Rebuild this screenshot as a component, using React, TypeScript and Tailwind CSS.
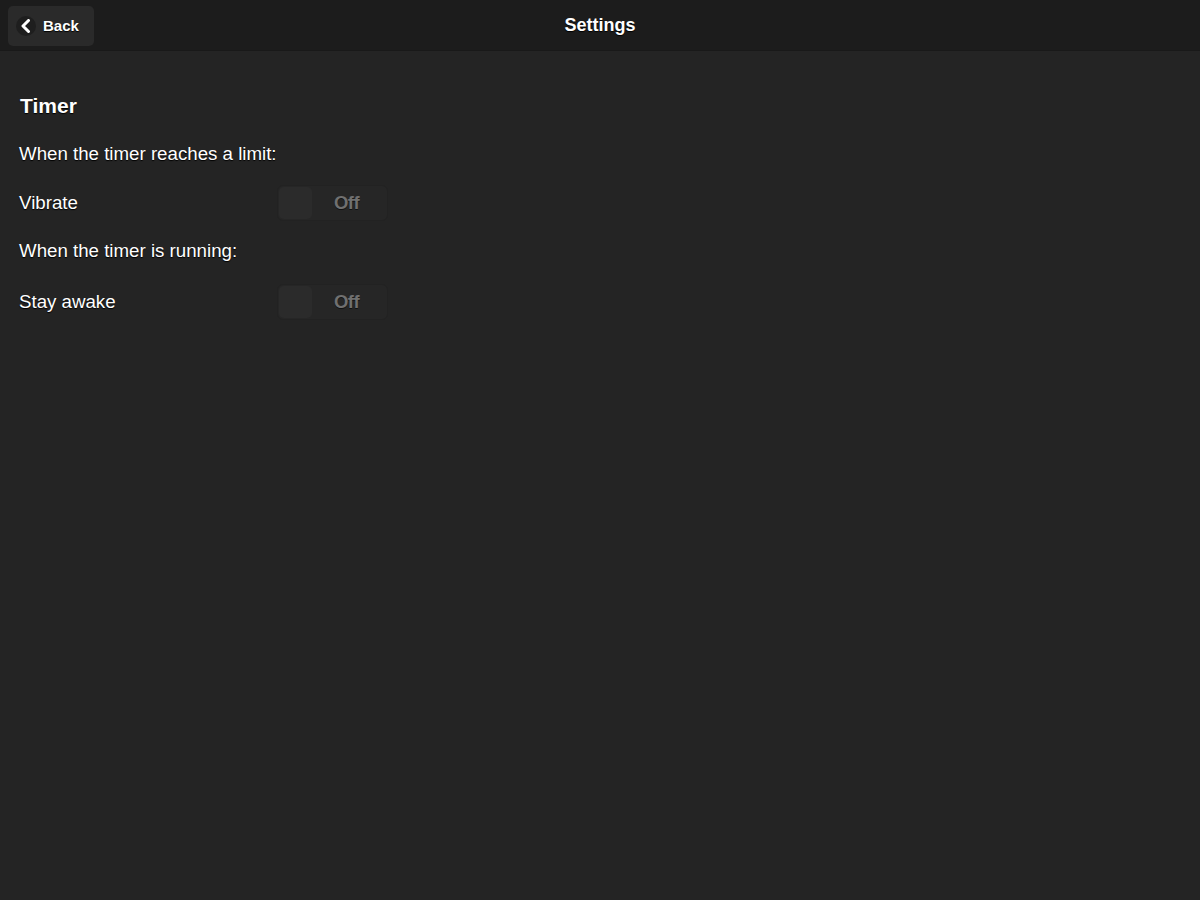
import React, { useState } from 'react';

function Toggle({ on, onChange }: { on: boolean; onChange: (v: boolean) => void }) {
  return (
    <button
      onClick={() => onChange(!on)}
      className="relative flex items-center h-[36px] w-[111px] rounded-[6px] bg-[#262626] border border-[#222222]"
    >
      <span className="ml-[1px] h-[32px] w-[33px] rounded-[5px] bg-[#2b2b2b]" />
      <span className="flex-1 pr-[6px] text-center text-[18.5px] font-bold tracking-[-0.5px] text-[#707070] [text-shadow:0_1px_0_#111]">
        {on ? 'On' : 'Off'}
      </span>
    </button>
  );
}

export default function App() {
  const [vibrate, setVibrate] = useState(false);
  const [awake, setAwake] = useState(false);

  return (
    <div className="min-h-[900px] w-full bg-[#242424] text-white font-['Liberation_Sans',Arial,sans-serif]">
      {/* Header */}
      <header className="relative h-[51px] bg-[#1c1c1c] border-b border-[#191919] flex items-center justify-center">
        <button className="absolute left-[8px] top-[6px] h-[40px] w-[86px] rounded-[5px] bg-[#2a2a2a] flex items-center pl-[8px] gap-[7px]">
          <span className="flex h-[20px] w-[20px] items-center justify-center rounded-full bg-[#1e1e1e]">
            <svg width="12" height="14" viewBox="0 0 12 14" fill="none">
              <path d="M8.5 1.5 L3 7 L8.5 12.5" stroke="white" strokeWidth="3" strokeLinecap="round" strokeLinejoin="round" />
            </svg>
          </span>
          <span className="text-[15px] font-bold [text-shadow:0_1px_1px_#000]">Back</span>
        </button>
        <h1 className="text-[18px] font-bold [text-shadow:0_1px_1px_#000]">Settings</h1>
      </header>

      {/* Content */}
      <main className="pl-[19px] pt-[40px] flex flex-col">
        <h2 className="h-[30px] flex items-center text-[21px] font-bold pl-[1px] [text-shadow:0_1px_1px_#000]">Timer</h2>
        <p className="mt-[18px] h-[30px] flex items-center text-[18.7px] [text-shadow:0_1px_1px_#000]">
          When the timer reaches a limit:
        </p>
        <div className="mt-[16px] flex items-center h-[36px]">
          <span className="w-[258px] text-[18.7px] [text-shadow:0_1px_1px_#000]">Vibrate</span>
          <Toggle on={vibrate} onChange={setVibrate} />
        </div>
        <p className="mt-[15px] h-[30px] flex items-center text-[18.7px] [text-shadow:0_1px_1px_#000]">
          When the timer is running:
        </p>
        <div className="mt-[18px] flex items-center h-[36px]">
          <span className="w-[258px] text-[18.7px] [text-shadow:0_1px_1px_#000]">Stay awake</span>
          <Toggle on={awake} onChange={setAwake} />
        </div>
      </main>
    </div>
  );
}
